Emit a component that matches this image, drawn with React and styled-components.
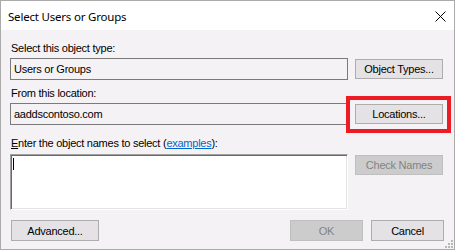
import React from "react";
import styled, { createGlobalStyle } from "styled-components";

const Global = createGlobalStyle`
  html, body { margin: 0; padding: 0; background: #ffffff; }
  * { box-sizing: border-box; }
`;

const Window = styled.div`
  width: 455px;
  height: 250px;
  border: 1px solid #aaaaaa;
  background: #f5f2f5;
  display: flex;
  flex-direction: column;
  position: relative;
  overflow: hidden;
`;

const TitleBar = styled.div`
  height: 29px;
  background: #ffffff;
  display: flex;
  align-items: center;
  justify-content: space-between;
  padding: 0 8px 0 7px;
`;

const Title = styled.span`
  font-family: "Noto Sans", "Liberation Sans", sans-serif;
  font-size: 11.5px;
  letter-spacing: -0.2px;
  color: #000;
  margin-top: 1px;
`;

const CloseButton = styled.div`
  width: 12px;
  height: 12px;
  display: flex;
  align-items: center;
  justify-content: center;
  margin-top: 1px;
`;

const Client = styled.div`
  flex: 1;
  padding: 12px 10px 0 9px;
  display: flex;
  flex-direction: column;
  font-family: "Liberation Sans", Arial, sans-serif;
  font-size: 11px;
  letter-spacing: -0.25px;
  color: #000;
`;

const Label = styled.div`
  height: 13px;
  line-height: 13px;
  padding-left: 1px;
  margin-top: ${(p) => p.$top || 0}px;
  white-space: nowrap;
`;

const Link = styled.span`
  color: #0066cc;
  text-decoration: underline;
`;

const Row = styled.div`
  display: flex;
  align-items: flex-start;
  gap: 7px;
  margin-top: ${(p) => p.$top || 0}px;
`;

const TextBox = styled.div`
  width: 338px;
  height: 22px;
  border: 1px solid #7a7a7a;
  background: #f5f2f5;
  padding-left: 3px;
  line-height: 20px;
  white-space: nowrap;
`;

const TextArea = styled.div`
  width: 338px;
  height: 56px;
  background: #ffffff;
  border: 1px solid;
  border-color: #a0a0a0 #ffffff #ffffff #a0a0a0;
  box-shadow: inset 1px 1px 0 #696969, inset -1px -1px 0 #e3e3e3;
  padding: 3px 0 0 2px;
`;

const Caret = styled.span`
  display: block;
  width: 1px;
  height: 12px;
  background: #000;
`;

const Button = styled.div`
  width: ${(p) => p.$w || 88}px;
  height: ${(p) => p.$h || 20}px;
  margin-top: ${(p) => p.$top || 0}px;
  border: 1px solid ${(p) => (p.$disabled ? "#bfbfbf" : "#adadad")};
  background: ${(p) => (p.$disabled ? "#cccccc" : "#e5e2e5")};
  color: ${(p) => (p.$disabled ? "#838383" : "#000")};
  display: flex;
  align-items: center;
  justify-content: center;
  white-space: nowrap;
`;

const Highlight = styled.div`
  position: relative;
  margin-top: 1px;
`;

const RedFrame = styled.div`
  position: absolute;
  left: -9px;
  top: -8px;
  right: -8px;
  bottom: -9px;
  border: 4px solid #ed1c24;
  pointer-events: none;
`;

const Footer = styled.div`
  display: flex;
  align-items: center;
  margin-top: 10px;
  padding-left: 1px;
`;

const Spacer = styled.div`
  flex: 1;
`;

const FooterRight = styled.div`
  display: flex;
  gap: 8px;
`;

const Grip = styled.svg`
  position: absolute;
  right: 1px;
  bottom: 1px;
`;

export default function App() {
  return (
    <>
      <Global />
      <Window>
        <TitleBar>
          <Title>Select Users or Groups</Title>
          <CloseButton>
            <svg width="11" height="11" viewBox="0 0 11 11">
              <path d="M0.5 0.5 L10.5 10.5 M10.5 0.5 L0.5 10.5" stroke="#000" strokeWidth="1" fill="none" />
            </svg>
          </CloseButton>
        </TitleBar>
        <Client>
          <Label>Select this object type:</Label>
          <Row $top={3}>
            <TextBox>Users or Groups</TextBox>
            <Button $top={1}>Object Types...</Button>
          </Row>
          <Label $top={7}>From this location:</Label>
          <Row $top={3}>
            <TextBox>aaddscontoso.com</TextBox>
            <Highlight>
              <Button>Locations...</Button>
              <RedFrame />
            </Highlight>
          </Row>
          <Label $top={12}>
            <u>E</u>nter the object names to select (<Link>examples</Link>):
          </Label>
          <Row $top={4}>
            <TextArea>
              <Caret />
            </TextArea>
            <Button $top={1} $disabled>
              Check Names
            </Button>
          </Row>
          <Footer>
            <Button $h={21}>Advanced...</Button>
            <Spacer />
            <FooterRight>
              <Button $w={73} $h={21} $disabled>
                OK
              </Button>
              <Button $w={73} $h={21}>
                Cancel
              </Button>
            </FooterRight>
          </Footer>
        </Client>
        <Grip width="9" height="9" viewBox="0 0 9 9">
          {[
            [7, 1],
            [7, 4],
            [4, 4],
            [7, 7],
            [4, 7],
            [1, 7],
          ].map(([x, y]) => (
            <rect key={`${x}-${y}`} x={x} y={y} width="2" height="2" fill="#b8b8b8" />
          ))}
        </Grip>
      </Window>
    </>
  );
}
